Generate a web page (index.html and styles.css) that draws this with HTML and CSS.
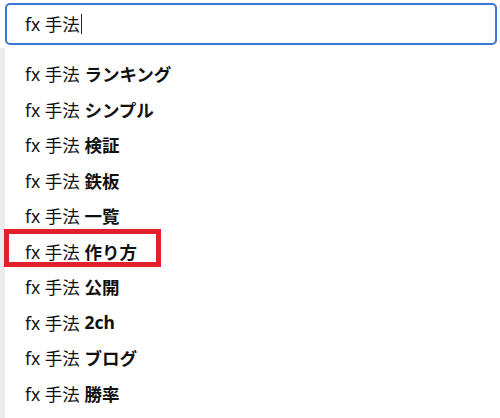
FILE: index.html
```html
<!DOCTYPE html>
<html lang="ja">
<head>
<meta charset="utf-8">
<link rel="stylesheet" href="styles.css">
</head>
<body>
<div class="page">
  <div class="search">
    <span class="query">fx 手法</span><span class="caret"></span>
  </div>
  <ul class="suggest">
    <li class="row">fx 手法 <b>ランキング</b></li>
    <li class="row">fx 手法 <b>シンプル</b></li>
    <li class="row">fx 手法 <b>検証</b></li>
    <li class="row">fx 手法 <b>鉄板</b></li>
    <li class="row">fx 手法 <b>一覧</b></li>
    <li class="row marked">fx 手法 <b>作り方</b></li>
    <li class="row">fx 手法 <b>公開</b></li>
    <li class="row">fx 手法 <b>2ch</b></li>
    <li class="row">fx 手法 <b>ブログ</b></li>
    <li class="row">fx 手法 <b>勝率</b></li>
  </ul>
</div>
</body>
</html>
```
FILE: styles.css
```css
html, body {
  margin: 0;
  padding: 0;
  background: #ffffff;
}
.page {
  width: 500px;
  height: 418px;
  overflow: hidden;
  font-family: "Noto Sans", "Noto Sans CJK JP", sans-serif;
  font-size: 17.5px;
  color: #111111;
}
.search {
  margin: 3px 3px 0 5px;
  height: 38px;
  border: 2px solid #3a78d4;
  border-radius: 5px;
  display: flex;
  align-items: center;
  padding-left: 18px;
}
.query {
  line-height: 20px;
}
.caret {
  display: inline-block;
  width: 1px;
  height: 20px;
  background: #222;
  margin-left: 1px;
}
.suggest {
  list-style: none;
  margin: 3px 0 0 0;
  padding: 8px 0 0 0;
  border-left: 5px solid #ececec;
  height: 400px;
}
.row {
  height: 35.5px;
  display: flex;
  align-items: center;
  padding-left: 20px;
  white-space: pre;
}
.row b {
  font-weight: 700;
}
.marked {
  position: relative;
}
.marked::before {
  content: "";
  position: absolute;
  left: -1px;
  top: -5px;
  width: 147px;
  height: 28px;
  border: 5px solid #e2202b;
}
```
